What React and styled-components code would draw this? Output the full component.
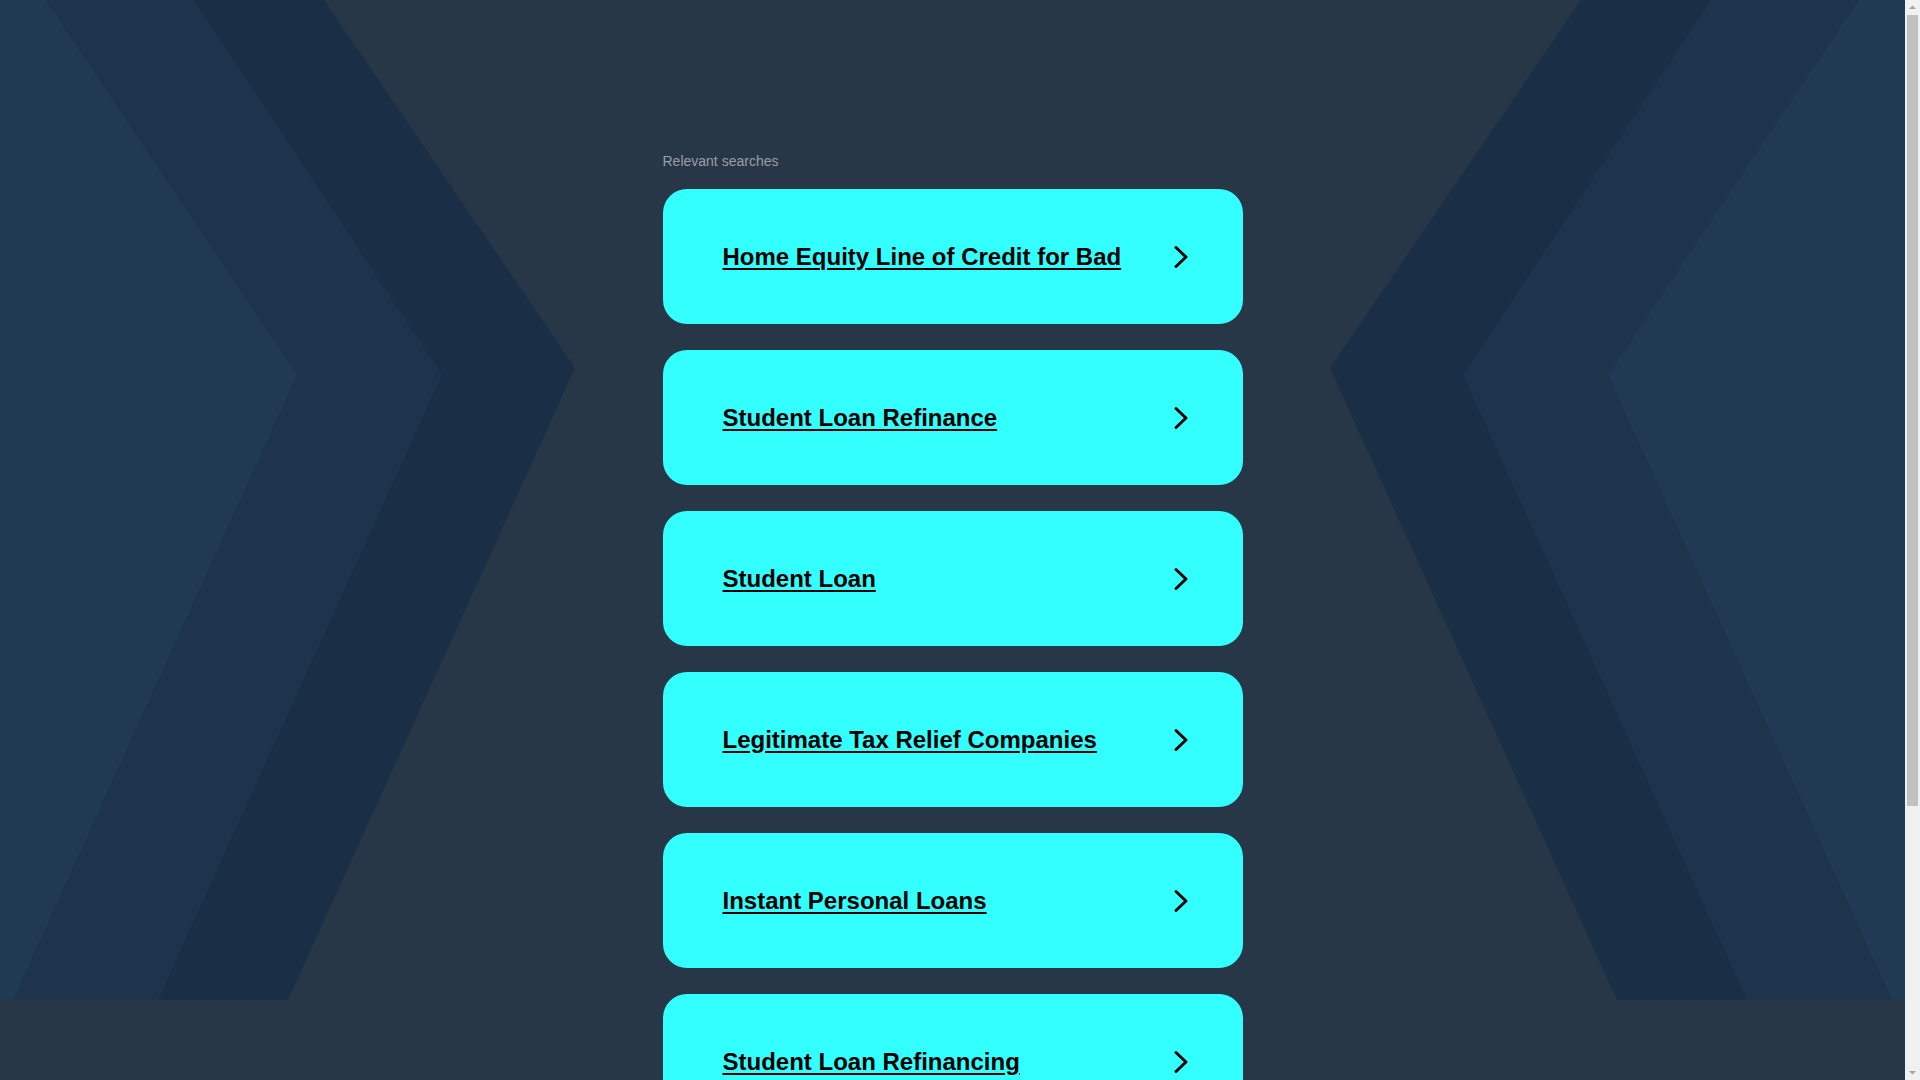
import React from "react";
import styled, { createGlobalStyle } from "styled-components";

const searches = [
  "Home Equity Line of Credit for Bad",
  "Student Loan Refinance",
  "Student Loan",
  "Legitimate Tax Relief Companies",
  "Instant Personal Loans",
  "Student Loan Refinancing",
];

// left half of the backdrop, the right one is mirrored at 1905 - x
const layers = [
  { fill: "#1a2f45", pts: [[0, 0], [324, 0], [575, 368], [288, 1000], [0, 1000]] },
  { fill: "#1d344c", pts: [[0, 0], [194, 0], [442, 375], [158, 1000], [0, 1000]] },
  { fill: "#1f3a52", pts: [[0, 0], [46, 0], [297, 375], [13, 1000], [0, 1000]] },
];

export default function App() {
  return (
    <>
      <GlobalStyle />
      <Page>
        <Backdrop viewBox="0 0 1905 1000" preserveAspectRatio="none">
          {layers.map((l, i) => (
            <g key={i} fill={l.fill}>
              <polygon points={l.pts.map((p) => p.join(",")).join(" ")} />
              <polygon points={l.pts.map(([x, y]) => `${1905 - x},${y}`).join(" ")} />
            </g>
          ))}
        </Backdrop>
        <Main>
          <Heading>Relevant searches</Heading>
          <List>
            {searches.map((s) => (
              <Card key={s} href="#">
                <Label>{s}</Label>
                <Chevron viewBox="0 0 16 24">
                  <path d="M3 2.5 L13 12 L3 21.5" />
                </Chevron>
              </Card>
            ))}
          </List>
        </Main>
      </Page>
      <Scrollbar>
        <Arrow viewBox="0 0 15 15">
          <path d="M4 9 L7.5 5.5 L11 9 Z" />
        </Arrow>
        <Track>
          <Thumb />
        </Track>
        <Arrow viewBox="0 0 15 15">
          <path d="M4 6 L7.5 9.5 L11 6 Z" />
        </Arrow>
      </Scrollbar>
    </>
  );
}

const GlobalStyle = createGlobalStyle`
  html, body {
    margin: 0;
    padding: 0;
    background: #273747;
    font-family: "Liberation Sans", Arial, sans-serif;
  }
`;

const Page = styled.div`
  position: relative;
  margin-right: 15px;
`;

const Backdrop = styled.svg`
  position: absolute;
  top: 0;
  left: 0;
  width: 100%;
  height: 1000px;
  z-index: 0;
`;

const Main = styled.main`
  position: relative;
  z-index: 1;
  width: 580px;
  margin: 0 auto;
  padding: 153px 0 305px;
`;

const Heading = styled.div`
  font-size: 14px;
  line-height: 16px;
  color: #9a9fa5;
  margin-bottom: 20px;
`;

const List = styled.div`
  display: flex;
  flex-direction: column;
  gap: 26px;
`;

const Card = styled.a`
  display: flex;
  align-items: center;
  justify-content: space-between;
  height: 135px;
  padding: 0 54px 0 60px;
  background: #33ffff;
  border-radius: 24px;
  color: #000;
  text-decoration: none;
`;

const Label = styled.span`
  font-size: 24px;
  font-weight: bold;
  text-decoration: underline;
  text-decoration-thickness: 2px;
  text-underline-offset: 3px;
`;

const Chevron = styled.svg`
  width: 16px;
  height: 24px;
  flex-shrink: 0;
  fill: none;
  stroke: #000;
  stroke-width: 3;
  stroke-linecap: round;
  stroke-linejoin: round;
`;

/* stand-in for the browser scrollbar seen in the capture */
const Scrollbar = styled.div`
  position: fixed;
  top: 0;
  right: 0;
  width: 15px;
  height: 100vh;
  display: flex;
  flex-direction: column;
  background: #f1f1f1;
  z-index: 2;
`;

const Arrow = styled.svg`
  width: 15px;
  height: 15px;
  flex-shrink: 0;
  fill: #a3a3a3;
`;

const Track = styled.div`
  flex: 1;
  padding: 0 2px;
`;

const Thumb = styled.div`
  height: 791px;
  background: #c1c1c1;
`;
